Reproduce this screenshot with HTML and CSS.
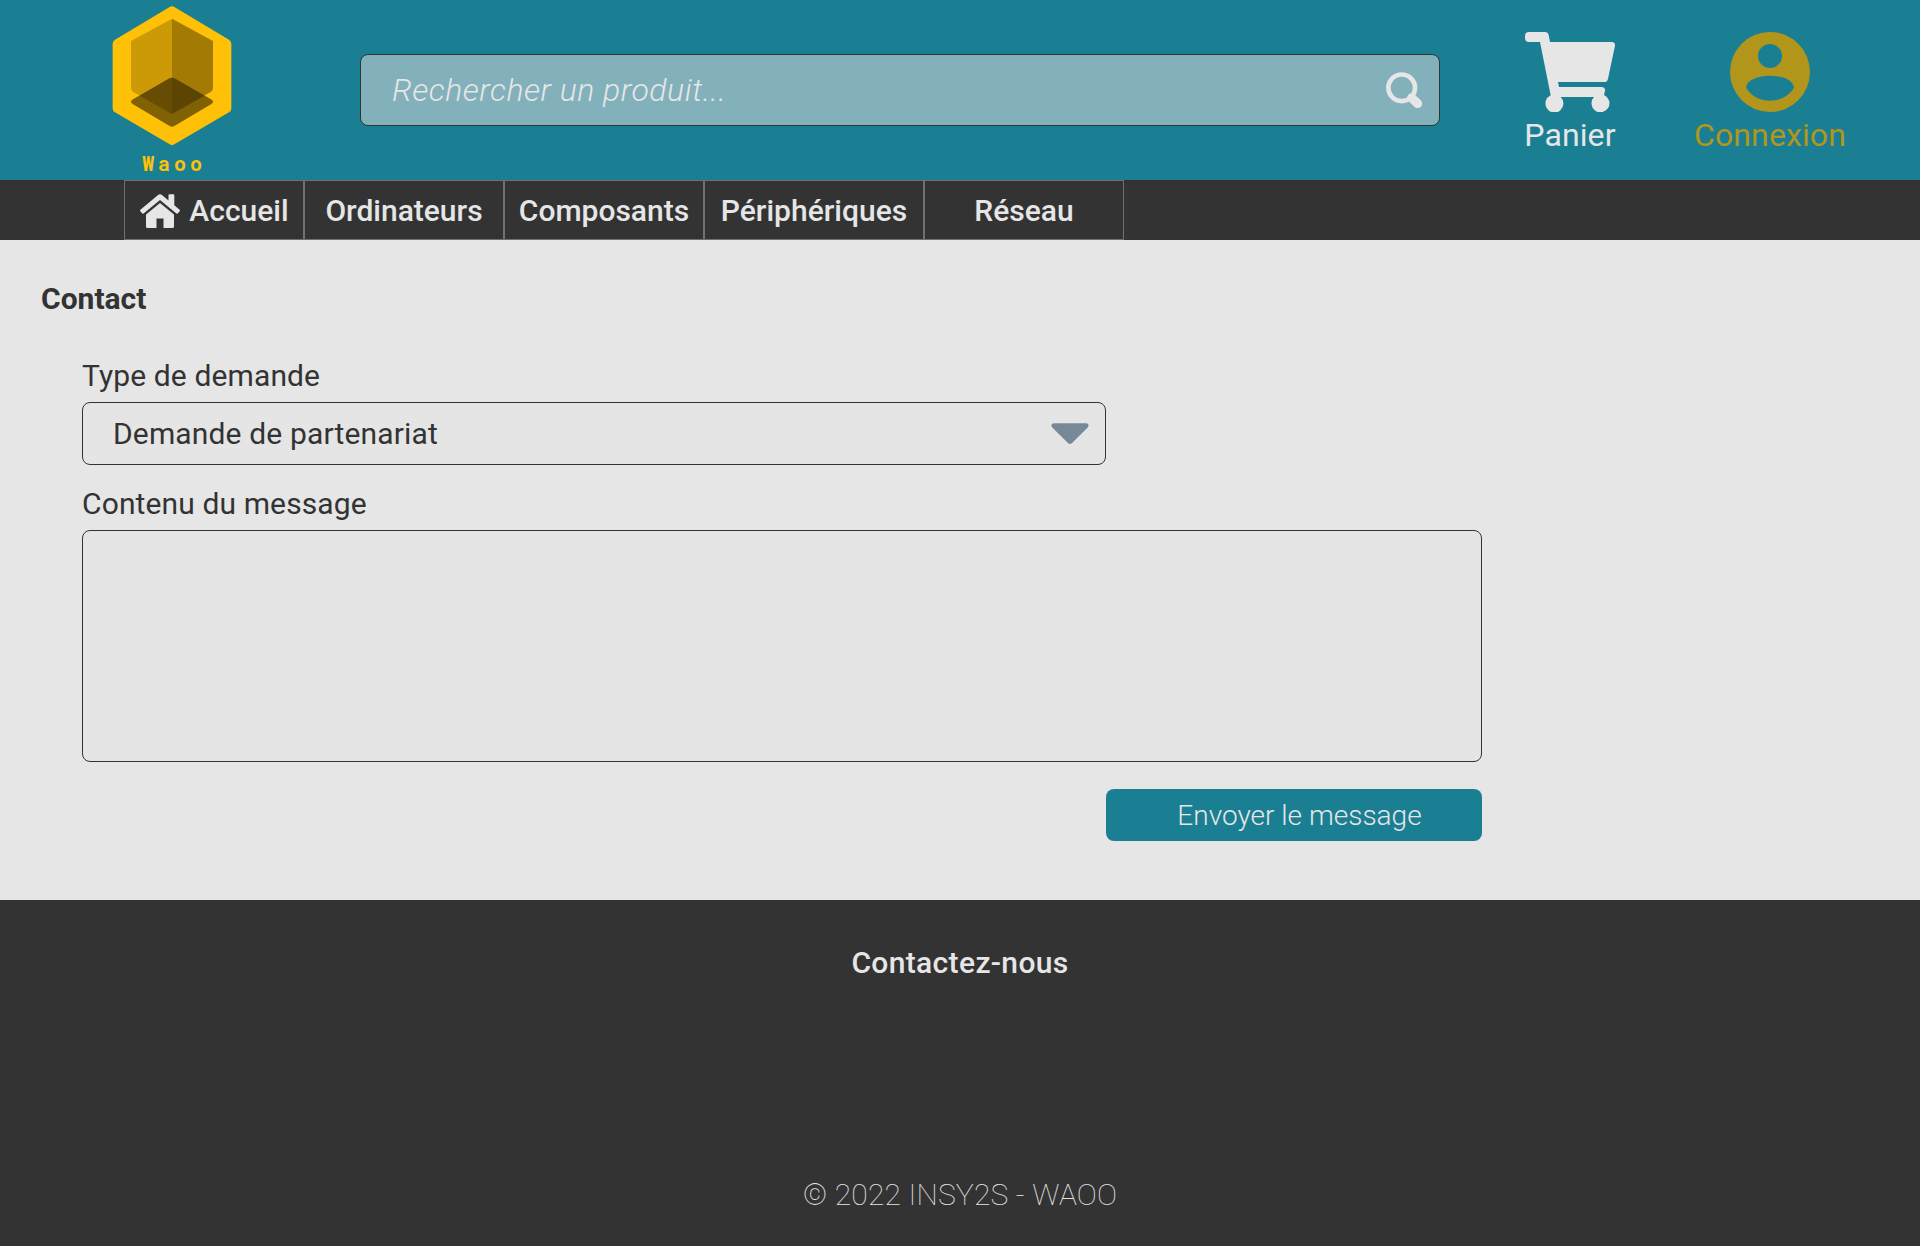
FILE: index.html
```html
<!DOCTYPE html>
<html lang="fr">
<head>
<meta charset="utf-8">
<title>Waoo - Contact</title>
<link rel="stylesheet" href="styles.css">
</head>
<body>
<header class="header">
  <a class="logo">
    <svg width="120" height="140" viewBox="0 0 360 420" aria-hidden="true">
      <path fill="#ffc107" d="M173 3q7-4 14 0L351 101q7 4 7 12V308q0 7-7 11L187 415q-7 5-14 0L9 319q-7-4-7-11V113q0-8 7-12Z"/>
      <path fill="#cc9a06" d="M180 38V324L63 257q-6-4-6-11V105Z"/>
      <path fill="#a37b04" d="M180 38 303 105V246q0 7-6 11L180 324Z"/>
      <path fill="#806103" d="M173 217q7-4 14 0L297 280q12 7 0 15L187 360q-7 5-14 0L63 295q-12-8 0-15Z"/>
      <path fill="#664d03" d="M180 215V324L83 269 173 217Z"/>
      <path fill="#5c4402" d="M180 215 187 217 278 269 180 324Z"/>
    </svg>
    <span class="brand">Waoo</span>
  </a>
  <div class="search">
    <span>Rechercher un produit...</span>
    <svg width="38" height="38" viewBox="0 0 38 38" fill="none" stroke="#e6e6e6" aria-hidden="true">
      <circle cx="16.7" cy="16.8" r="13.3" stroke-width="4.7"/>
      <path d="M26.5 26.8 32.7 32.6" stroke-width="9" stroke-linecap="round"/>
    </svg>
  </div>
  <a class="action cart">
    <svg width="90" height="80" viewBox="0 0 270 240" fill="#e6e6e6" aria-hidden="true">
      <path d="M12 0H60Q69 0 71 9L75 30H260Q271 30 270 41L249 140Q247 150 238 150H99L102 165H229Q241 165 240 176L237 189A27 27 0 1 1 207 195H107A27 27 0 1 1 77 190L45 30H12Q0 30 0 18V12Q0 0 12 0Z"/>
    </svg>
    <span>Panier</span>
  </a>
  <a class="action login">
    <svg width="80" height="80" viewBox="0 0 240 240" fill="#b1961b" aria-hidden="true">
      <path fill-rule="evenodd" d="M120 0A120 120 0 1 1 120 240A120 120 0 1 1 120 0ZM120 36A36 36 0 1 0 120 108A36 36 0 1 0 120 36ZM48 167C80 219 160 219 192 167C188 119 52 119 48 167Z"/>
    </svg>
    <span>Connexion</span>
  </a>
</header>
<nav class="nav">
  <a class="tab home">
    <svg width="40" height="34" viewBox="0 0 40 34" fill="#e6e6e6" aria-hidden="true">
      <path d="M20 9 34 20.500V32.500Q34 34 32.500 34H23.500V24.500H16.500V34H7.500Q6 34 6 32.500V20.500Z"/>
      <path d="M17.800 1.200Q20 -.6 22.200 1.200L28.500 6.400V1.200Q28.500 .3 29.400 .3H33.400Q34.300 .3 34.300 1.200V11.300L39.600 15.800Q40.300 16.400 39.700 17.200L37.900 19.300Q37.200 20.100 36.400 19.400L20 5.900 3.600 19.400Q2.800 20.100 2.100 19.300L.3 17.200Q-.3 16.400 .4 15.800Z"/>
    </svg>
    <span>Accueil</span>
  </a>
  <a class="tab">Ordinateurs</a>
  <a class="tab">Composants</a>
  <a class="tab wide">Périphériques</a>
  <a class="tab">Réseau</a>
</nav>
<main class="main">
  <h1 class="title">Contact</h1>
  <form class="form">
    <div class="label">Type de demande</div>
    <div class="select">
      <span>Demande de partenariat</span>
      <svg width="38" height="22" viewBox="0 0 38 22" fill="#778899" aria-hidden="true">
        <path d="M3 .3H35Q37.500 .3 37.600 2.500 37.600 3.600 36.500 4.700L21 20Q19 22 17 20L1.500 4.700Q.4 3.600 .4 2.500 .5 .3 3 .3Z"/>
      </svg>
    </div>
    <div class="label second">Contenu du message</div>
    <div class="textarea"></div>
    <div class="submit">Envoyer le message</div>
  </form>
</main>
<footer class="footer">
  <div class="footer-title">Contactez-nous</div>
  <div class="copyright">© 2022 INSY2S - WAOO</div>
</footer>
</body>
</html>
```
FILE: styles.css
```css
* { box-sizing: border-box; }
body { margin: 0; font-family: Roboto, sans-serif; font-size: 30px; line-height: 36px; color: #333; background: #e6e6e6; white-space: nowrap; }
svg { display: block; flex: none; }
.header { display: flex; height: 180px; background: #1b7f94; color: #e6e6e6; }
.logo { width: 120px; margin: 6px 0 0 112px; }
.brand { display: block; padding: 5px 0 0 4px; text-align: center; font: bold 20px/24px "Roboto Mono", "Liberation Mono", monospace; letter-spacing: 3.9px; color: #ffc107; }
.search { display: flex; align-items: center; justify-content: space-between; width: 1080px; height: 72px; margin: 54px 0 0 128px; padding: 0 16px 0 31px; border: 1px solid #333; border-radius: 8px; background: #82b1bb; font-size: 32px; font-weight: 300; font-style: italic; letter-spacing: .5px; }
.action { display: flex; flex-direction: column; align-items: center; margin-top: 32px; font-size: 32px; line-height: 46px; letter-spacing: .1px; }
.cart { width: 96px; margin-left: 82px; }
.login { width: 160px; margin-left: 72px; color: #b1961b; }
.nav { display: flex; height: 60px; padding-left: 124px; background: #333; color: #e6e6e6; font-weight: 500; }
.tab { display: flex; align-items: center; justify-content: center; width: 200px; padding-top: 2px; border: 1px solid #707070; }
.home { width: 180px; gap: 9px; padding-left: 1px; }
.wide { width: 220px; }
.main { height: 660px; padding: 41px 0 0 41px; }
.title { margin: 0; font-size: 30px; line-height: 36px; font-weight: 700; }
.form { width: 1400px; margin: 41px 0 0 41px; }
.label { letter-spacing: .12px; }
.select { display: flex; align-items: center; justify-content: space-between; width: 1024px; height: 63px; margin-top: 8px; padding: 0 16px 0 30px; border: 1px solid #333; border-radius: 8px; background: #e5e5e5; letter-spacing: .15px; }
.second { margin-top: 21px; }
.textarea { height: 232px; margin-top: 8px; border: 1px solid #333; border-radius: 8px; background: #e5e5e5; }
.submit { width: 376px; height: 52px; margin: 27px 0 0 auto; padding: 1px 0 0 11px; border-radius: 8px; background: #1b7f94; color: #e6e6e6; font-size: 28px; font-weight: 300; line-height: 52px; text-align: center; }
.footer { display: flex; flex-direction: column; justify-content: space-between; height: 346px; padding: 45px 0 33px; background: #333; color: #e6e6e6; text-align: center; }
.footer-title { font-weight: 500; letter-spacing: .35px; }
.copyright { font-weight: 100; letter-spacing: .18px; }
```
